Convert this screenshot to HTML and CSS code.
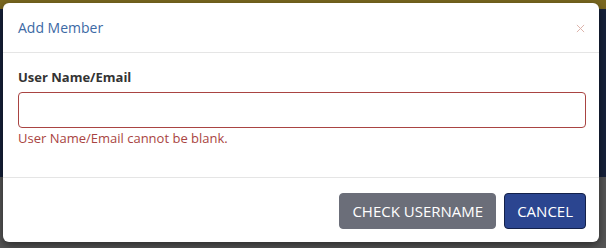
FILE: index.html
```html
<!DOCTYPE html>
<html lang="en">
<head>
    <meta charset="UTF-8">
    <title>Add Member</title>
    <link rel="stylesheet" href="styles.css">
</head>
<body>
    <div class="backdrop">
        <div class="strip-top"></div>
        <div class="strip-navy"></div>
        <div class="strip-gray"></div>
    </div>

    <div class="modal">
        <div class="modal-header">
            <h4 class="modal-title">Add Member</h4>
            <button type="button" class="close" aria-label="Close">
                <svg width="9" height="9" viewBox="0 0 10 10"><path d="M1 1 L9 9 M9 1 L1 9" stroke="#ddb3aa" stroke-width="1.1" fill="none"/></svg>
            </button>
        </div>
        <div class="modal-body">
            <label for="userName">User Name/Email</label>
            <input type="text" id="userName" class="form-control has-error">
            <div class="help-block">User Name/Email cannot be blank.</div>
        </div>
        <div class="modal-footer">
            <button type="button" class="btn btn-gray">CHECK USERNAME</button>
            <button type="button" class="btn btn-navy">CANCEL</button>
        </div>
    </div>
</body>
</html>
```

FILE: styles.css
```css
body {
    margin: 0;
    font-family: "Open Sans", Arial, sans-serif;
    width: 606px;
    height: 248px;
    overflow: hidden;
}
.backdrop {
    display: flex;
    flex-direction: column;
    height: 248px;
}
.strip-top {
    height: 9px;
    background-color: #7a6820;
}
.strip-navy {
    height: 168px;
    background-color: #16213a;
}
.strip-gray {
    flex: 1;
    background-color: #565656;
}
.modal {
    position: absolute;
    left: 3px;
    top: 3px;
    width: 596px;
    height: 239px;
    background: #fff;
    border-radius: 6px;
    box-shadow: 0 3px 8px rgba(0, 0, 0, 0.5);
    display: flex;
    flex-direction: column;
    box-sizing: border-box;
}
.modal-header {
    display: flex;
    align-items: center;
    justify-content: space-between;
    height: 50px;
    padding: 0 15px;
    border-bottom: 1px solid #e5e5e5;
    box-sizing: border-box;
}
.modal-title {
    margin: 0 0 1px;
    font-size: 14px;
    font-weight: normal;
    color: #3c69a5;
}
.close {
    border: none;
    background: none;
    padding: 0;
    margin-right: -1px;
    margin-top: 1px;
    display: flex;
    cursor: pointer;
}
.modal-body {
    padding: 15px 13px 0 15px;
    height: 125px;
    box-sizing: border-box;
    border-bottom: 1px solid #e5e5e5;
}
.modal-body label {
    display: block;
    font-size: 13px;
    font-weight: bold;
    color: #333;
    margin-bottom: 6px;
}
.form-control {
    display: block;
    width: 100%;
    height: 36px;
    box-sizing: border-box;
    border: 1px solid #a94442;
    border-radius: 4px;
    padding: 6px 12px;
    font-size: 13px;
}
.help-block {
    font-size: 13px;
    color: #a94442;
    margin-top: 1px;
}
.modal-footer {
    flex: 1;
    display: flex;
    justify-content: flex-end;
    align-items: flex-start;
    gap: 8px;
    padding: 15px 13px 0 15px;
}
.btn {
    height: 36px;
    padding: 0 12px;
    font-family: "Open Sans", Arial, sans-serif;
    font-size: 15px;
    color: #fff;
    border-radius: 4px;
    cursor: pointer;
}
.btn-gray {
    background-color: #6b6e79;
    border: 1px solid #6b6e79;
}
.btn-navy {
    background-color: #2b4590;
    border: 1px solid #14214a;
}
```
